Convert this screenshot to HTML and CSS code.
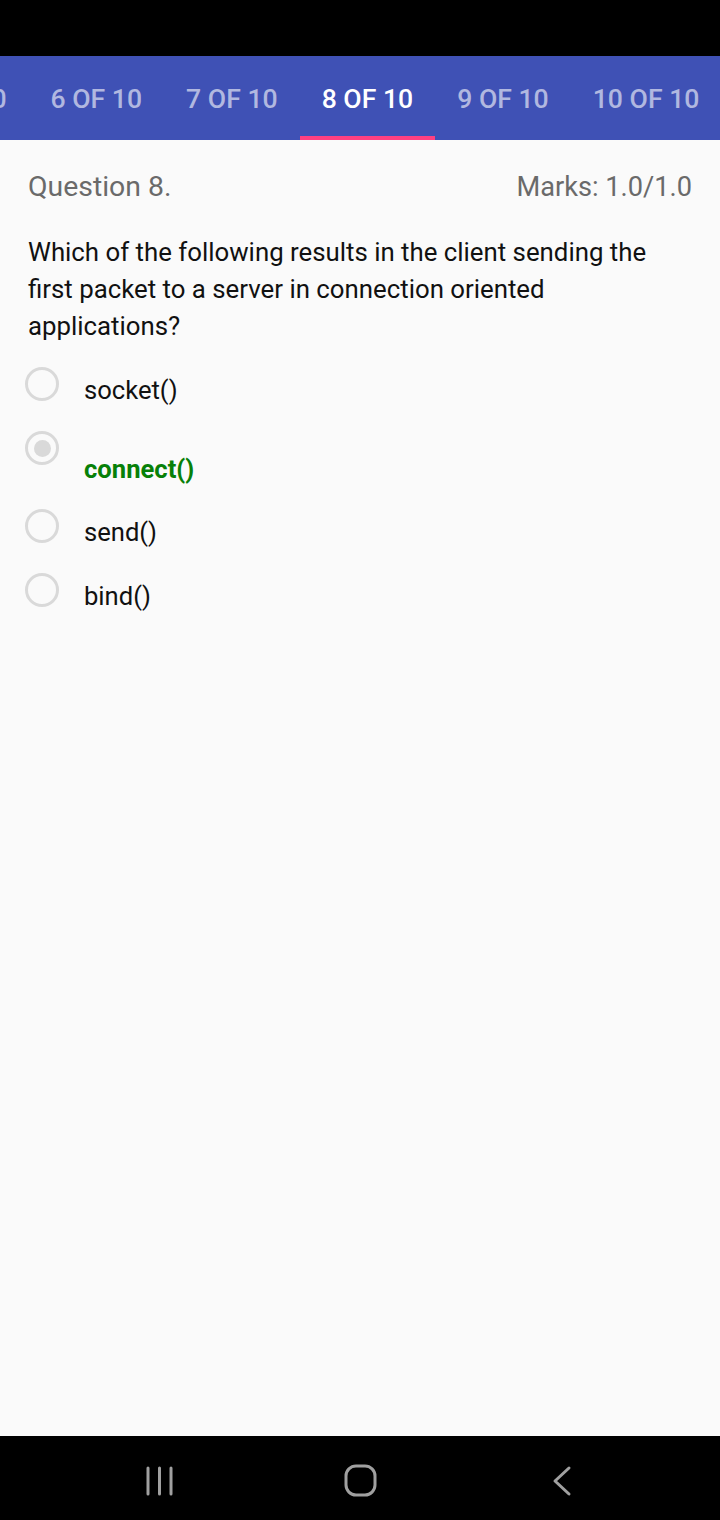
FILE: index.html
```html
<!DOCTYPE html>
<html>
<head>
<meta charset="utf-8">
<link rel="stylesheet" href="styles.css">
</head>
<body>
<div class="screen">
  <div class="statusbar"></div>
  <div class="tabbar">
    <div class="tabs">
      <div class="tab">5 OF 10</div>
      <div class="tab">6 OF 10</div>
      <div class="tab">7 OF 10</div>
      <div class="tab active">8 OF 10</div>
      <div class="tab">9 OF 10</div>
      <div class="tab">10 OF 10</div>
    </div>
  </div>
  <main class="content">
    <div class="qhead">
      <span class="qnum">Question 8.</span>
      <span class="marks">Marks: 1.0/1.0</span>
    </div>
    <p class="qtext">Which of the following results in the client sending the first packet to a server in connection oriented applications?</p>
    <ul class="options">
      <li class="option"><span class="radio"></span><span class="label">socket()</span></li>
      <li class="option correct"><span class="radio checked"></span><span class="label">connect()</span></li>
      <li class="option"><span class="radio"></span><span class="label">send()</span></li>
      <li class="option"><span class="radio"></span><span class="label">bind()</span></li>
    </ul>
  </main>
  <nav class="navbar">
    <svg class="nav-icon recents" width="30" height="32" viewBox="0 0 30 32"><g stroke="#a0a0a0" stroke-width="3" stroke-linecap="round"><line x1="3" y1="3" x2="3" y2="29"/><line x1="14.5" y1="3" x2="14.5" y2="29"/><line x1="26" y1="3" x2="26" y2="29"/></g></svg>
    <svg class="nav-icon home" width="34" height="34" viewBox="0 0 34 34"><rect x="2" y="2" width="29" height="29" rx="10" fill="none" stroke="#a0a0a0" stroke-width="3"/></svg>
    <svg class="nav-icon back" width="22" height="32" viewBox="0 0 22 32"><polyline points="18,3 4,16 18,29" fill="none" stroke="#a0a0a0" stroke-width="3" stroke-linecap="round" stroke-linejoin="round"/></svg>
  </nav>
</div>
</body>
</html>
```
FILE: styles.css
```css
* { box-sizing: border-box; }
html, body { margin: 0; padding: 0; }
body {
  width: 720px;
  height: 1520px;
  overflow: hidden;
  font-family: Roboto, "Noto Sans", sans-serif;
  background: #fafafa;
}
.screen {
  display: flex;
  flex-direction: column;
  height: 1520px;
}
.statusbar {
  height: 56px;
  background: #000;
  flex: none;
}
.tabbar {
  height: 84px;
  background: #3f51b5;
  flex: none;
  overflow: hidden;
}
.tabs {
  display: flex;
  height: 100%;
  margin-left: -107px;
}
.tab {
  flex: none;
  padding: 4px 22px 0;
  height: 100%;
  display: flex;
  align-items: center;
  justify-content: center;
  font-size: 26.6px;
  font-weight: 500;
  color: rgba(255, 255, 255, 0.6);
  white-space: nowrap;
  border-bottom: 4px solid transparent;
}
.tab.active {
  color: #fff;
  border-bottom-color: #ff4081;
}
.content {
  flex: 1;
  padding: 0 28px;
}
.qhead {
  display: flex;
  justify-content: space-between;
  align-items: baseline;
  margin-top: 29px;
  line-height: 36px;
  color: #6a6a6a;
}
.qnum { font-size: 28.4px; }
.marks { font-size: 27.2px; }
.qtext {
  margin: 29px 0 0;
  font-size: 25.8px;
  line-height: 37px;
  color: #111;
}
.options {
  list-style: none;
  margin: 15px 0 0 -3px;
  padding: 0;
}
.option {
  display: flex;
  align-items: flex-start;
  height: 64px;
}
.option.correct { height: 78px; }
.radio {
  flex: none;
  width: 34px;
  height: 34px;
  border: 3px solid #d9d9d9;
  border-radius: 50%;
  margin-top: 7px;
  display: flex;
  align-items: center;
  justify-content: center;
}
.radio.checked::after {
  content: "";
  width: 17px;
  height: 17px;
  border-radius: 50%;
  background: #d9d9d9;
}
.label {
  margin-left: 25px;
  font-size: 25.6px;
  line-height: 30px;
  margin-top: 15px;
  color: #111;
}
.correct .label {
  color: #078008;
  font-weight: 700;
  margin-top: 30px;
}
.navbar {
  height: 84px;
  flex: none;
  background: #000;
  display: flex;
  align-items: center;
  padding: 6px 0 0 145px;
}
.nav-icon { display: block; flex: none; }
.home { margin-left: 169px; }
.back { margin-left: 173px; }
```
